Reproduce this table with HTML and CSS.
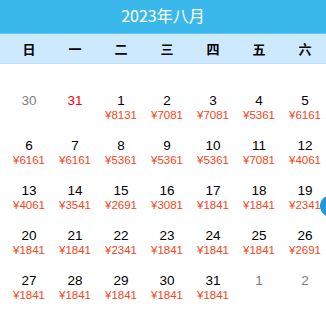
FILE: index.html
```html
<!DOCTYPE html>
<html lang="zh">
<head>
<meta charset="utf-8">
<link rel="stylesheet" href="styles.css">
</head>
<body>
<div class="cal">
  <div class="title">2023年八月</div>
  <div class="weekdays">
    <span>日</span><span>一</span><span>二</span><span>三</span><span>四</span><span>五</span><span>六</span>
  </div>
  <div class="grid">
    <div class="cell"><div class="d other">30</div></div>
    <div class="cell"><div class="d red">31</div></div>
    <div class="cell"><div class="d">1</div><div class="p">¥8131</div></div>
    <div class="cell"><div class="d">2</div><div class="p">¥7081</div></div>
    <div class="cell"><div class="d">3</div><div class="p">¥7081</div></div>
    <div class="cell"><div class="d">4</div><div class="p">¥5361</div></div>
    <div class="cell"><div class="d">5</div><div class="p">¥6161</div></div>

    <div class="cell"><div class="d">6</div><div class="p">¥6161</div></div>
    <div class="cell"><div class="d">7</div><div class="p">¥6161</div></div>
    <div class="cell"><div class="d">8</div><div class="p">¥5361</div></div>
    <div class="cell"><div class="d">9</div><div class="p">¥5361</div></div>
    <div class="cell"><div class="d">10</div><div class="p">¥5361</div></div>
    <div class="cell"><div class="d">11</div><div class="p">¥7081</div></div>
    <div class="cell"><div class="d">12</div><div class="p">¥4061</div></div>

    <div class="cell"><div class="d">13</div><div class="p">¥4061</div></div>
    <div class="cell"><div class="d">14</div><div class="p">¥3541</div></div>
    <div class="cell"><div class="d">15</div><div class="p">¥2691</div></div>
    <div class="cell"><div class="d">16</div><div class="p">¥3081</div></div>
    <div class="cell"><div class="d">17</div><div class="p">¥1841</div></div>
    <div class="cell"><div class="d">18</div><div class="p">¥1841</div></div>
    <div class="cell"><div class="d">19</div><div class="p">¥2341</div></div>

    <div class="cell"><div class="d">20</div><div class="p">¥1841</div></div>
    <div class="cell"><div class="d">21</div><div class="p">¥1841</div></div>
    <div class="cell"><div class="d">22</div><div class="p">¥2341</div></div>
    <div class="cell"><div class="d">23</div><div class="p">¥1841</div></div>
    <div class="cell"><div class="d">24</div><div class="p">¥1841</div></div>
    <div class="cell"><div class="d">25</div><div class="p">¥1841</div></div>
    <div class="cell"><div class="d">26</div><div class="p">¥2691</div></div>

    <div class="cell"><div class="d">27</div><div class="p">¥1841</div></div>
    <div class="cell"><div class="d">28</div><div class="p">¥1841</div></div>
    <div class="cell"><div class="d">29</div><div class="p">¥1841</div></div>
    <div class="cell"><div class="d">30</div><div class="p">¥1841</div></div>
    <div class="cell"><div class="d">31</div><div class="p">¥1841</div></div>
    <div class="cell"><div class="d other">1</div></div>
    <div class="cell"><div class="d other">2</div></div>
  </div>
  <div class="fab"></div>
</div>
</body>
</html>
```
FILE: styles.css
```css
* { box-sizing: border-box; }
html, body { margin: 0; padding: 0; background: #fff; overflow: hidden; }
body { width: 326px; height: 317px; font-family: "Noto Sans CJK SC", "Noto Sans", sans-serif; }
.cal { position: relative; width: 326px; height: 317px; overflow: hidden; }
.title {
  height: 33px;
  background: #3bb8eb;
  color: #fff;
  font-size: 16px;
  line-height: 31px;
  text-align: center;
  border-bottom: 1px solid #5ec6f0;
  box-sizing: content-box;
}
.weekdays {
  display: grid;
  grid-template-columns: repeat(7, 46px);
  padding-left: 6px;
  height: 30px;
  background: #cce9fd;
  border-bottom: 1px solid #bfe2fb;
  align-items: center;
  font-size: 13px;
  font-weight: bold;
  color: #000;
}
.weekdays span { text-align: center; line-height: 26px; }
.grid {
  display: grid;
  grid-template-columns: repeat(7, 46px);
  grid-auto-rows: 45px;
  padding-left: 6px;
  margin-top: 27px;
  font-family: "Liberation Sans", Arial, sans-serif;
}
.cell { text-align: center; }
.d { font-size: 13.5px; line-height: 16px; color: #000; padding-top: 2px; }
.p { font-size: 11.5px; line-height: 13px; color: #f3461b; }
.other { color: #808080; }
.red { color: #ff0000; }
.fab {
  position: absolute;
  left: 320px;
  top: 195px;
  width: 22px;
  height: 22px;
  border-radius: 50%;
  background: #1e9be0;
}
```
